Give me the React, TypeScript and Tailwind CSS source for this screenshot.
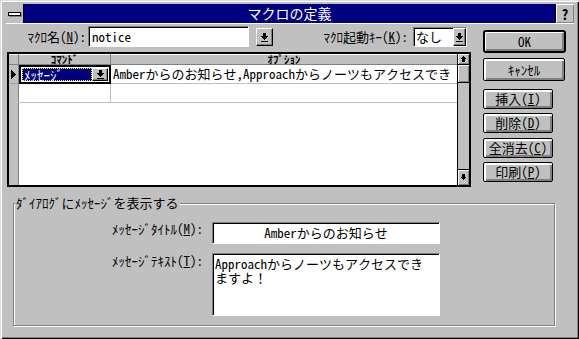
import React from "react";

const F = "font-['Noto_Sans_Mono_CJK_JP','Noto_Sans_CJK_JP',sans-serif]";

function ComboArrow() {
  return (
    <svg width="7" height="9" viewBox="0 0 7 9" shapeRendering="crispEdges">
      <rect x="2" y="0" width="3" height="3" fill="#000" />
      <rect x="0" y="3" width="7" height="1" fill="#000" />
      <rect x="1" y="4" width="5" height="1" fill="#000" />
      <rect x="2" y="5" width="3" height="1" fill="#000" />
      <rect x="3" y="6" width="1" height="1" fill="#000" />
      <rect x="0" y="8" width="7" height="1" fill="#000" />
    </svg>
  );
}

function UpArrow() {
  return (
    <svg width="5" height="6" viewBox="0 0 5 6" shapeRendering="crispEdges">
      <rect x="2" y="0" width="1" height="1" fill="#000" />
      <rect x="1" y="1" width="3" height="1" fill="#000" />
      <rect x="0" y="2" width="5" height="1" fill="#000" />
      <rect x="1" y="3" width="3" height="3" fill="#000" />
    </svg>
  );
}

function DownArrow() {
  return (
    <svg width="5" height="7" viewBox="0 0 5 7" shapeRendering="crispEdges">
      <rect x="1" y="0" width="3" height="3" fill="#000" />
      <rect x="0" y="3" width="5" height="1" fill="#000" />
      <rect x="1" y="4" width="3" height="1" fill="#000" />
      <rect x="2" y="5" width="1" height="1" fill="#000" />
    </svg>
  );
}

function ComboBtn({ className = "" }: { className?: string }) {
  return (
    <div
      className={`bg-[#c0c0c0] border border-t-white border-l-white border-r-black border-b-black shadow-[inset_-1px_-1px_0_#808080] flex items-center justify-center ${className}`}
    >
      <ComboArrow />
    </div>
  );
}

const field =
  "bg-white border border-t-[#808080] border-l-[#808080] border-r-white border-b-white shadow-[inset_1px_1px_0_#000]";

const btn =
  "bg-[#c0c0c0] border border-black rounded-[2px] shadow-[inset_1px_1px_0_#fff,inset_2px_2px_0_#fff,inset_-1px_-1px_0_#808080,inset_-2px_-2px_0_#808080] flex items-center justify-center text-[13px]";

export default function App() {
  return (
    <div
      className={`${F} w-[579px] h-[339px] bg-[#c0c0c0] text-black text-[13px] leading-[14px] overflow-hidden shadow-[inset_1px_1px_0_#dfdfdf,inset_2px_2px_0_#ffffff,inset_-1px_-1px_0_#000000,inset_-2px_-2px_0_#808080]`}
    >
      {/* Title bar */}
      <div className="pt-[4px] pl-[6px] pr-[5px]">
        <div className="flex h-[19px]">
          <div className="w-[18px] h-full bg-[#c0c0c0] border-r border-black flex items-center justify-center">
            <div className="w-[13px] h-[4px] bg-white border border-black shadow-[1px_1px_0_#808080]" />
          </div>
          <div className="flex-1 bg-[#000080] text-white text-[14px] leading-[19px] text-center">
            マクロの定義
          </div>
          <div className="w-[19px] h-full border-l border-black bg-[#c0c0c0] shadow-[inset_1px_1px_0_#fff,inset_-1px_-1px_0_#808080] flex items-center justify-center text-[14px] font-bold leading-none">
            ?
          </div>
        </div>
        <div className="h-px bg-white" />
      </div>

      {/* Body */}
      <div className="flex pt-[2px]">
        {/* Left column */}
        <div className="pl-[7px] flex flex-col">
          {/* top row */}
          <div className="flex items-start h-[21px]">
            <div className="w-[81px] text-right pr-[2px] leading-[21px] whitespace-nowrap">
              ﾏｸﾛ名(<u>N</u>):
            </div>
            <div className={`${field} w-[161px] h-[21px] pl-[3px] leading-[19px]`}>notice</div>
            <ComboBtn className="ml-[7px] mt-[2px] w-[17px] h-[18px]" />
            <div className="w-[140px] text-right pr-[5px] leading-[21px] whitespace-nowrap">
              ﾏｸﾛ起動ｷｰ(<u>K</u>):
            </div>
            <div className={`${field} mt-[1px] w-[54px] h-[20px] flex`}>
              <div className="flex-1 pl-[2px] leading-[18px]">なし</div>
              <ComboBtn className="w-[13px] h-full" />
            </div>
          </div>

          {/* grid */}
          <div className="mt-[5px] w-[464px] h-[135px] border-2 border-black bg-white flex">
            <div className="flex-1 flex flex-col">
              {/* header */}
              <div className="flex h-[11px] bg-[#c0c0c0] border-b border-[#808080] shadow-[inset_0_1px_0_#fff]">
                <div className="w-[10px] border-r border-[#808080]" />
                <div className="w-[92px] border-r border-[#808080] text-center text-[11px] font-bold leading-[10px]">
                  ｺﾏﾝﾄﾞ
                </div>
                <div className="flex-1 text-center text-[11px] font-bold leading-[10px]">
                  ｵﾌﾟｼｮﾝ
                </div>
              </div>
              {/* row 1 */}
              <div className="flex h-[19px]">
                <div className="w-[10px] bg-[#c0c0c0] border-r border-[#808080] border-b border-b-[#a0a0a0] flex items-center justify-center">
                  <svg width="5" height="9" viewBox="0 0 5 9" shapeRendering="crispEdges">
                    <polygon points="0,0 5,4.5 0,9" fill="#000" />
                  </svg>
                </div>
                <div className="w-[92px] h-[19px] border-2 border-black p-[1px] flex">
                  <div className="flex-1 bg-[#000080] border border-dotted border-[#ffff00] text-white leading-[11px] pl-[1px] whitespace-nowrap">
                    ﾒｯｾｰｼﾞ
                  </div>
                  <ComboBtn className="w-[16px] h-full" />
                </div>
                <div className="flex-1 border-b border-[#c0c0c0] pl-[2px] leading-[18px] whitespace-nowrap overflow-hidden">
                  Amberからのお知らせ,Approachからノーツもアクセスでき
                </div>
              </div>
              {/* row 2 */}
              <div className="flex h-[19px] border-b border-[#c0c0c0]">
                <div className="w-[10px] bg-[#c0c0c0] border-r border-[#808080]" />
                <div className="w-[92px] border-r border-[#c0c0c0]" />
                <div className="flex-1" />
              </div>
              {/* filler */}
              <div className="flex flex-1">
                <div className="w-[10px] bg-[#c0c0c0] border-r border-[#808080]" />
                <div className="flex-1" />
              </div>
            </div>
            {/* scrollbar */}
            <div className="w-[12px] border-l border-black flex flex-col bg-[#c0c0c0]">
              <div className="h-[11px] border-b border-black shadow-[inset_1px_1px_0_#fff,inset_-1px_-1px_0_#808080] flex items-center justify-center">
                <UpArrow />
              </div>
              <div className="h-[18px] border-b border-black shadow-[inset_1px_1px_0_#fff,inset_-1px_-1px_0_#808080]" />
              <div className="flex-1 bg-[#c0c0c0]" />
              <div className="h-[16px] border-t border-black shadow-[inset_1px_1px_0_#fff,inset_-1px_-1px_0_#808080] flex items-center justify-center">
                <DownArrow />
              </div>
            </div>
          </div>
        </div>

        {/* Right buttons */}
        <div className="ml-[12px] pt-[4px] flex flex-col items-start">
          <div className="h-[23px] w-[83px] bg-[#c0c0c0] border-2 border-black rounded-[3px] shadow-[inset_1px_1px_0_#fff,inset_-1px_-1px_0_#808080,inset_-2px_-2px_0_#808080] flex items-center justify-center">
            OK
          </div>
          <div className={`${btn} mt-[5px] h-[23px] w-[82px]`}>ｷｬﾝｾﾙ</div>
          <div className={`${btn} mt-[8px] h-[20px] w-[70px]`}>
            挿入(<u>I</u>)
          </div>
          <div className={`${btn} mt-[4px] h-[20px] w-[70px]`}>
            削除(<u>D</u>)
          </div>
          <div className={`${btn} mt-[5px] h-[20px] w-[70px]`}>
            全消去(<u>C</u>)
          </div>
          <div className={`${btn} mt-[4px] h-[20px] w-[70px]`}>
            印刷(<u>P</u>)
          </div>
        </div>
      </div>

      {/* Group box */}
      <div className="mt-[16px] ml-[13px] w-[542px] h-[123px] border border-[#808080] shadow-[1px_1px_0_#fff,inset_1px_1px_0_#fff]">
        <div className="-mt-[8px] ml-[1px] w-fit px-[1px] bg-[#c0c0c0] leading-[14px] whitespace-nowrap">
          ﾀﾞｲｱﾛｸﾞにﾒｯｾｰｼﾞを表示する
        </div>
        <div className="mt-[12px] grid grid-cols-[189px_228px] gap-x-[9px] gap-y-[9px]">
          <div className="text-right leading-[13px] whitespace-nowrap">
            ﾒｯｾｰｼﾞﾀｲﾄﾙ(<u>M</u>):
          </div>
          <div className={`${field} h-[22px] text-center leading-[20px] whitespace-nowrap`}>
            Amberからのお知らせ
          </div>
          <div className="text-right leading-[13px] mt-[1px] whitespace-nowrap">
            ﾒｯｾｰｼﾞﾃｷｽﾄ(<u>T</u>):
          </div>
          <div className={`${field} h-[63px] pl-[2px] pt-[3px] leading-[14px]`}>
            Approachからノーツもアクセスでき
            <br />
            ますよ！
          </div>
        </div>
      </div>
    </div>
  );
}
